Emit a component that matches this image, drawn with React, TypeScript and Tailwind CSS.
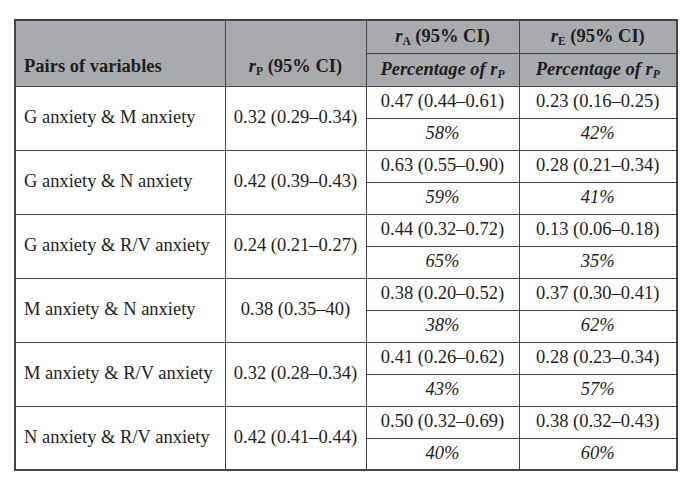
import React from 'react';

type Row = {
    pair: string;
    rp: string;
    ra: string;
    re: string;
    pa: string;
    pe: string;
};

const rows: Row[] = [
    { pair: 'G anxiety & M anxiety', rp: '0.32 (0.29–0.34)', ra: '0.47 (0.44–0.61)', re: '0.23 (0.16–0.25)', pa: '58%', pe: '42%' },
    { pair: 'G anxiety & N anxiety', rp: '0.42 (0.39–0.43)', ra: '0.63 (0.55–0.90)', re: '0.28 (0.21–0.34)', pa: '59%', pe: '41%' },
    { pair: 'G anxiety & R/V anxiety', rp: '0.24 (0.21–0.27)', ra: '0.44 (0.32–0.72)', re: '0.13 (0.06–0.18)', pa: '65%', pe: '35%' },
    { pair: 'M anxiety & N anxiety', rp: '0.38 (0.35–40)', ra: '0.38 (0.20–0.52)', re: '0.37 (0.30–0.41)', pa: '38%', pe: '62%' },
    { pair: 'M anxiety & R/V anxiety', rp: '0.32 (0.28–0.34)', ra: '0.41 (0.26–0.62)', re: '0.28 (0.23–0.34)', pa: '43%', pe: '57%' },
    { pair: 'N anxiety & R/V anxiety', rp: '0.42 (0.41–0.44)', ra: '0.50 (0.32–0.69)', re: '0.38 (0.32–0.43)', pa: '40%', pe: '60%' },
];

function R({ sub }: { sub: string }) {
    return (
        <span>
            <i>r</i>
            <sub className="text-[11.5px] align-baseline relative top-[3px]">{sub}</sub>
        </span>
    );
}

const cell = 'border-[1.5px] border-[#444] p-0';

export default function App() {
    return (
        <div className="w-[690px] h-[483px] bg-white pt-[19px] pl-[14px] font-['Liberation_Serif',serif] text-[18.5px] text-[#1e1e1e]">
            <table className="w-[662px] border-collapse border-2 border-[#444] table-fixed">
                <colgroup>
                    <col className="w-[210px]" />
                    <col className="w-[141px]" />
                    <col className="w-[153px]" />
                    <col className="w-[158px]" />
                </colgroup>
                <thead className="bg-[#a9aaad] font-bold">
                    <tr className="h-[33px]">
                        <th rowSpan={2} className={`${cell} text-left align-bottom pl-[8px] pb-[5px]`}>
                            Pairs of variables
                        </th>
                        <th rowSpan={2} className={`${cell} text-center align-bottom pb-[5px]`}>
                            <R sub="P" /> (95% CI)
                        </th>
                        <th className={`${cell} text-center`}>
                            <R sub="A" /> (95% CI)
                        </th>
                        <th className={`${cell} text-center`}>
                            <R sub="E" /> (95% CI)
                        </th>
                    </tr>
                    <tr className="h-[33px]">
                        <th className={`${cell} text-center italic`}>
                            Percentage of <R sub="P" />
                        </th>
                        <th className={`${cell} text-center italic`}>
                            Percentage of <R sub="P" />
                        </th>
                    </tr>
                </thead>
                <tbody>
                    {rows.map((r) => (
                        <React.Fragment key={r.pair}>
                            <tr className="h-[32px]">
                                <td rowSpan={2} className={`${cell} text-left pl-[8px]`}>
                                    {r.pair}
                                </td>
                                <td rowSpan={2} className={`${cell} text-center`}>
                                    {r.rp}
                                </td>
                                <td className={`${cell} text-center`}>{r.ra}</td>
                                <td className={`${cell} text-center`}>{r.re}</td>
                            </tr>
                            <tr className="h-[32px]">
                                <td className={`${cell} text-center italic`}>{r.pa}</td>
                                <td className={`${cell} text-center italic`}>{r.pe}</td>
                            </tr>
                        </React.Fragment>
                    ))}
                </tbody>
            </table>
        </div>
    );
}
